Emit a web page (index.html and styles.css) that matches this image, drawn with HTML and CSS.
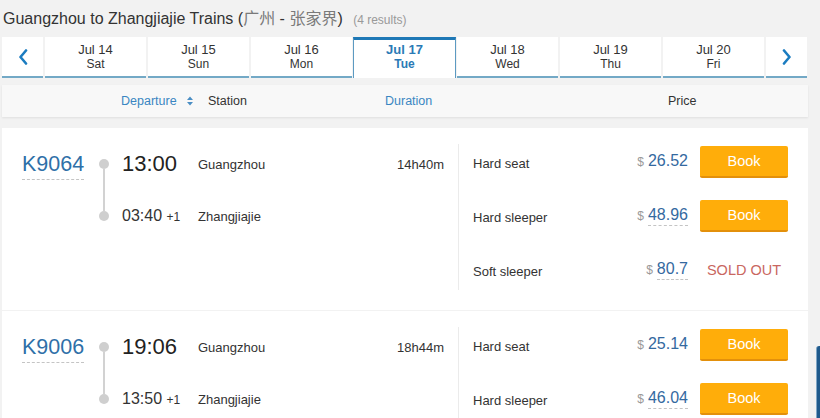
FILE: index.html
```html
<!DOCTYPE html>
<html>
<head>
<meta charset="utf-8">
<link rel="stylesheet" href="styles.css">
</head>
<body>
<div class="title">
  <span class="route">Guangzhou to Zhangjiajie Trains (<span class="cjk">广州</span> - <span class="cjk">张家界</span>)</span>
  <span class="count">(4 results)</span>
</div>

<div class="tabs">
  <div class="tab arrow">
    <svg width="10" height="16" viewBox="0 0 10 16"><path d="M8 1.5 L2.5 8 L8 14.5" fill="none" stroke="#1b7cc0" stroke-width="2.6" stroke-linecap="round" stroke-linejoin="round"/></svg>
  </div>
  <div class="tab"><div class="d">Jul 14</div><div class="w">Sat</div></div>
  <div class="tab"><div class="d">Jul 15</div><div class="w">Sun</div></div>
  <div class="tab"><div class="d">Jul 16</div><div class="w">Mon</div></div>
  <div class="tab active"><div class="d">Jul 17</div><div class="w">Tue</div></div>
  <div class="tab"><div class="d">Jul 18</div><div class="w">Wed</div></div>
  <div class="tab"><div class="d">Jul 19</div><div class="w">Thu</div></div>
  <div class="tab"><div class="d">Jul 20</div><div class="w">Fri</div></div>
  <div class="tab arrow">
    <svg width="10" height="16" viewBox="0 0 10 16"><path d="M2 1.5 L7.5 8 L2 14.5" fill="none" stroke="#1b7cc0" stroke-width="2.6" stroke-linecap="round" stroke-linejoin="round"/></svg>
  </div>
</div>

<div class="thead">
  <span class="h-dep">Departure
    <svg class="sort" width="6" height="10" viewBox="0 0 6 10"><path d="M0 4 L3 0.5 L6 4 Z M0 6 L3 9.5 L6 6 Z" fill="#4a8ec4"/></svg>
  </span>
  <span class="h-station">Station</span>
  <span class="h-dur">Duration</span>
  <span class="h-price">Price</span>
</div>

<div class="card">
  <div class="trip">
    <div class="train"><span class="num">K9064</span></div>
    <div class="line"><span class="dot"></span><span class="bar"></span><span class="dot"></span></div>
    <div class="stops">
      <div class="stop first"><span class="time big">13:00</span><span class="station">Guangzhou</span><span class="dur">14h40m</span></div>
      <div class="stop"><span class="time">03:40 <small>+1</small></span><span class="station">Zhangjiajie</span></div>
    </div>
  </div>
  <div class="seats">
    <div class="seat"><span class="sname">Hard seat</span><span class="price"><span class="cur">$</span><span class="amt">26.52</span></span><span class="act"><span class="book">Book</span></span></div>
    <div class="seat"><span class="sname">Hard sleeper</span><span class="price"><span class="cur">$</span><span class="amt dash">48.96</span></span><span class="act"><span class="book">Book</span></span></div>
    <div class="seat"><span class="sname">Soft sleeper</span><span class="price"><span class="cur">$</span><span class="amt dash">80.7</span></span><span class="act"><span class="sold">SOLD OUT</span></span></div>
  </div>
</div>

<div class="card">
  <div class="trip">
    <div class="train"><span class="num">K9006</span></div>
    <div class="line"><span class="dot"></span><span class="bar"></span><span class="dot"></span></div>
    <div class="stops">
      <div class="stop first"><span class="time big">19:06</span><span class="station">Guangzhou</span><span class="dur">18h44m</span></div>
      <div class="stop"><span class="time">13:50 <small>+1</small></span><span class="station">Zhangjiajie</span></div>
    </div>
  </div>
  <div class="seats">
    <div class="seat"><span class="sname">Hard seat</span><span class="price"><span class="cur">$</span><span class="amt">25.14</span></span><span class="act"><span class="book">Book</span></span></div>
    <div class="seat"><span class="sname">Hard sleeper</span><span class="price"><span class="cur">$</span><span class="amt dash">46.04</span></span><span class="act"><span class="book">Book</span></span></div>
  </div>
</div>

<div class="side-tab"></div>
</body>
</html>
```

FILE: styles.css
```css
html { overflow: hidden; }
body {
  margin: 0;
  background: #f2f2f2;
  font-family: "Liberation Sans", Arial, sans-serif;
  color: #333;
  width: 820px;
}

.title {
  height: 37px;
  box-sizing: border-box;
  padding: 8px 0 0 3px;
  line-height: 19px;
  white-space: nowrap;
}
.route { font-size: 16px; color: #333; }
.cjk {
  font-family: "Noto Sans CJK SC", sans-serif;
  font-size: 16px;
  color: #7a7a7a;
}
.count { font-size: 12px; color: #999; margin-left: 6px; }

.tabs {
  display: flex;
  gap: 2px;
  margin-left: 2px;
  height: 41px;
}
.tab {
  width: 101px;
  height: 41px;
  box-sizing: border-box;
  background: #fff;
  border-bottom: 2px solid #73a9c6;
  padding-top: 5px;
  text-align: center;
}
.tab .d { font-size: 13px; line-height: 15px; color: #333; }
.tab .w { font-size: 12px; line-height: 15px; color: #333; }
.tab.arrow {
  width: 41px;
  padding-top: 0;
  display: flex;
  align-items: center;
  justify-content: center;
}
.tab.active {
  width: 103px;
  margin-left: -1px;
  margin-right: -1px;
  border: 1px solid #5c9ac2;
  border-top: 3px solid #1e78b6;
  border-bottom: 0;
  padding-top: 2px;
}
.tab.active .d, .tab.active .w { color: #2b7ab6; font-weight: bold; }

.thead {
  margin: 7px 0 0 2px;
  width: 806px;
  height: 32px;
  background: #f8f8f8;
  box-shadow: 0 1px 2px rgba(0, 0, 0, 0.08);
  display: flex;
  align-items: center;
  font-size: 12.5px;
  padding-left: 119px;
  box-sizing: border-box;
}
.h-dep { width: 87px; color: #3a86c2; display: flex; align-items: center; }
.sort { margin-left: 10px; }
.h-station { width: 177px; color: #333; }
.h-dur { width: 283px; color: #3a86c2; }
.h-price { color: #333; }

.card {
  margin: 11px 0 0 2px;
  width: 806px;
  background: #fff;
  display: flex;
}
.card + .card { margin-top: 1px; }

.trip {
  width: 456px;
  box-sizing: border-box;
  padding: 24px 14px 0 20px;
  display: flex;
}
.train { width: 77px; }
.num {
  display: inline-block;
  font-size: 21.5px;
  line-height: 24px;
  color: #2f70a8;
  padding-bottom: 3px;
  border-bottom: 1px dashed #c4c4c4;
}
.line {
  width: 10px;
  margin-right: 13px;
  padding-top: 7px;
  display: flex;
  flex-direction: column;
  align-items: center;
}
.dot { width: 10px; height: 10px; border-radius: 50%; background: #cfcfcf; }
.bar { width: 2px; height: 42px; background: #d2d2d2; }
.stops { flex: 1; }
.stop { display: flex; align-items: center; height: 24px; }
.stop.first { margin-bottom: 28px; }
.time { width: 76px; font-size: 16px; color: #333; }
.time.big { font-size: 22px; color: #222; }
.time small { font-size: 12px; }
.station { flex: 1; font-size: 13px; color: #333; }
.dur { font-size: 13px; color: #333; }

.seats {
  flex: 1;
  margin: 16px 0 20px;
  border-left: 1px solid #ebebeb;
  padding: 0 20px 2px 14px;
}
.seat { display: flex; align-items: center; height: 36px; }
.seat + .seat { margin-top: 18px; }
.sname { flex: 1; font-size: 13px; color: #333; padding-top: 2px; }
.price { display: flex; align-items: baseline; margin-top: -2px; }
.cur { font-size: 12px; color: #999; margin-right: 4px; }
.amt { font-size: 16px; color: #34699f; line-height: 20px; border-bottom: 1px solid transparent; }
.amt.dash { border-bottom: 1px dashed #c4c4c4; }
.act { width: 88px; margin-left: 12px; text-align: center; }
.book {
  display: block;
  height: 32px;
  box-sizing: border-box;
  background: #ffad0a;
  border-bottom: 2px solid #e3900b;
  border-radius: 2px;
  color: #fff;
  font-size: 14.5px;
  line-height: 30px;
}
.sold { font-size: 14.5px; color: #c9675f; }

.side-tab {
  position: fixed;
  left: 816px;
  top: 346px;
  width: 10px;
  bottom: 0;
  background: #1f5a8c;
  border-left: 1px solid #7fa6c6;
  border-radius: 3px 0 0 0;
}
```
